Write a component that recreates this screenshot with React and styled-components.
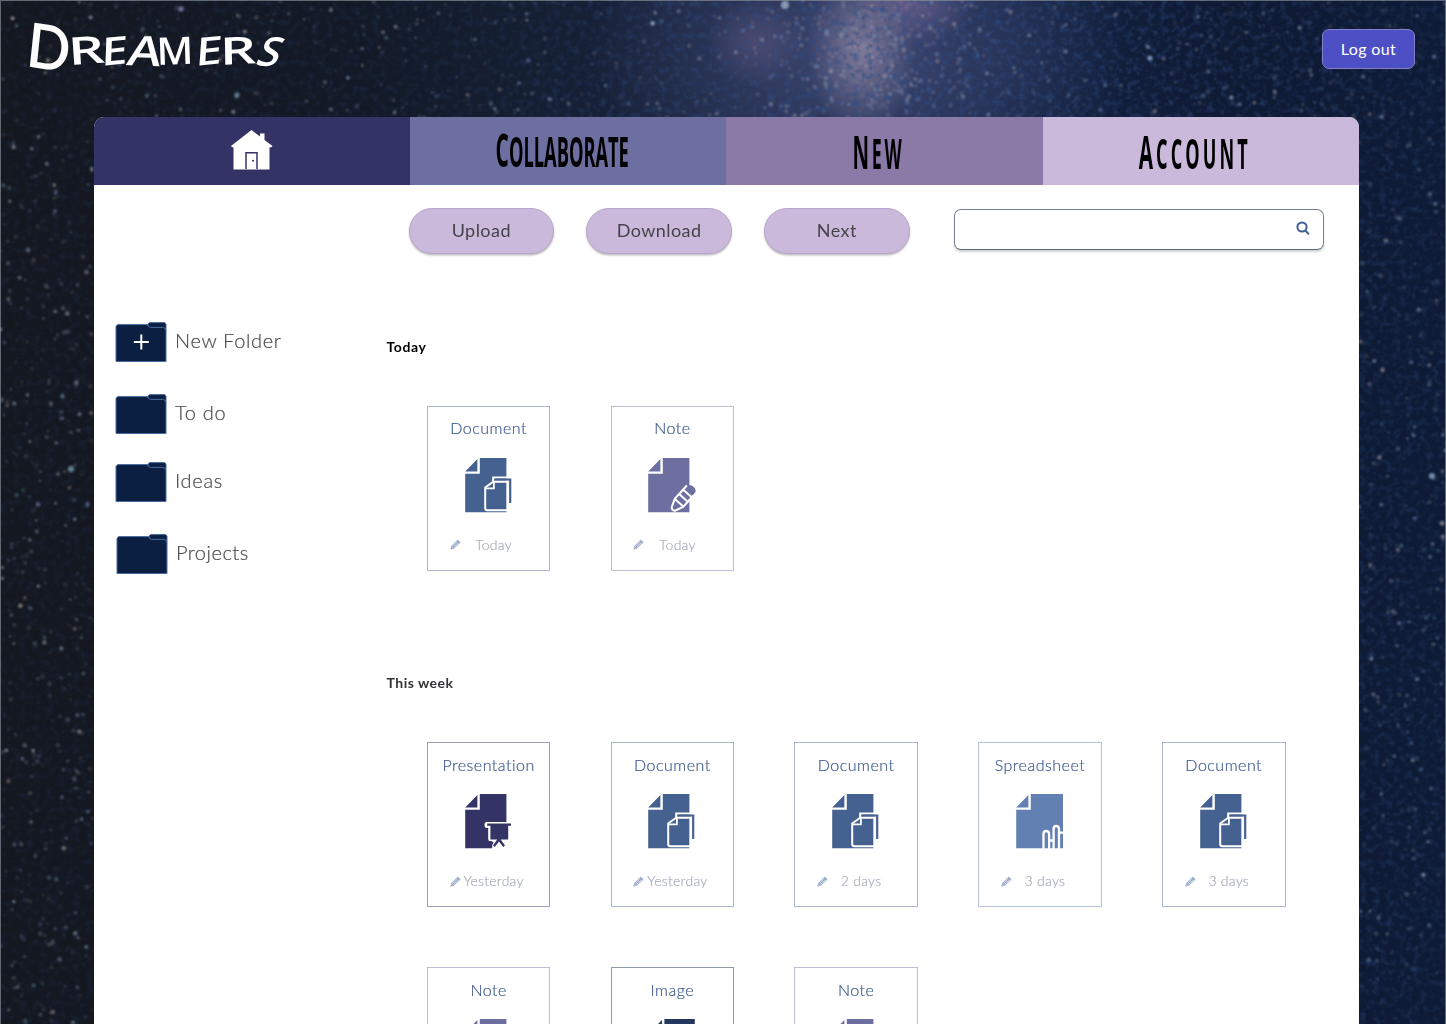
import React from "react";
import styled, { createGlobalStyle } from "styled-components";

const GlobalStyle = createGlobalStyle`
  * { box-sizing: border-box; }
  body { margin: 0; font-family: Lato, "Open Sans", sans-serif; background: #111827; }
  button { font: inherit; }
`;

const Page = styled.div`
  position: relative;
  width: 1446px;
  height: 1024px;
  overflow: hidden;
  display: flex;
  flex-direction: column;
  background:
    radial-gradient(ellipse 55px 85px at 862px 50px, rgba(170, 156, 180, 0.6), transparent),
    radial-gradient(ellipse 60px 45px at 915px 0px, rgba(150, 125, 175, 0.5), transparent),
    radial-gradient(ellipse 50px 45px at 755px 42px, rgba(120, 100, 145, 0.4), transparent),
    radial-gradient(ellipse 270px 200px at 860px 50px, rgba(78, 84, 132, 0.75), transparent),
    linear-gradient(90deg, #14181f 0%, #131926 25%, #17223a 45%, #132242 70%, #0f1a33 85%, #0e1b36 100%);
`;

const Sky = styled.svg`
  position: absolute;
  inset: 0;
`;

const Frame = styled.div`
  position: absolute;
  inset: 0;
  border: 1px solid rgba(140, 148, 155, 0.65);
  border-bottom: 0;
`;

const Header = styled.header`
  position: relative;
  height: 116.5px;
  flex: none;
  display: flex;
  justify-content: space-between;
  align-items: flex-start;
  padding: 29px 31px 0 26px;
`;

const Logo = styled.h1`
  margin: -18px 0 0;
  height: 60px;
  display: flex;
  align-items: baseline;
  color: #fff;
  font-family: "Open Sans", sans-serif;
  font-weight: 600;
  line-height: 60px;
`;

const LogoLetter = styled.span`
  display: block;
  width: ${(p) => p.$width}px;
  font-size: ${(p) => p.$size}px;
  transform-origin: 0 75%;
  transform: translateY(${(p) => p.$drop || 0}px) skewX(${(p) => p.$skew}deg) rotate(${(p) => p.$turn}deg) scaleX(${(p) => p.$stretch});
  &:first-child { font-family: Lato, sans-serif; }
`;

const LogOut = styled.button`
  width: 93px;
  height: 40px;
  padding: 0 0 2px;
  border: 1px solid #8380c9;
  border-radius: 7px;
  background: #4d4fc4;
  color: #fff;
  font-size: 16px;
  letter-spacing: 0.35px;
`;

const Panel = styled.main`
  position: relative;
  flex: 1;
  min-height: 0;
  width: 1265.5px;
  margin-left: 93.5px;
  display: flex;
  flex-direction: column;
  background: #fff;
  border-radius: 10px 10px 0 0;
  overflow: hidden;
`;

const Tabs = styled.nav`
  flex: none;
  height: 68px;
  display: grid;
  grid-template-columns: repeat(4, 1fr);
  grid-template-rows: 68px;
`;

const Tab = styled.a`
  display: flex;
  align-items: center;
  justify-content: center;
  padding-bottom: 1px;
  background: ${(p) => p.$color};
`;

const TabLabel = styled.span`
  display: block;
  font: 700 41px/60px "Open Sans", sans-serif;
  text-transform: uppercase;
  color: #000;
  white-space: nowrap;
  letter-spacing: ${(p) => p.$spacing}px;
  transform: translate(${(p) => p.$shift}px, ${(p) => p.$drop}px) scaleX(${(p) => p.$narrow});
  &::first-letter { font-size: 47px; }
`;

const Toolbar = styled.div`
  flex: none;
  display: flex;
  align-items: flex-start;
  padding: 23.5px 0 0 315px;
  height: 113px;
`;

const Pill = styled.button`
  width: 145.6px;
  height: 46px;
  margin-right: 32.2px;
  padding: 0 0 2px;
  border: 1px solid #b7a5cb;
  border-radius: 23px;
  background: #cbb9dc;
  box-shadow: 0 1.5px 2px rgba(0, 0, 0, 0.26);
  color: #454348;
  font-size: 18px;
  letter-spacing: 0.45px;
`;

const Search = styled.label`
  width: 370px;
  height: 41px;
  margin: 0.5px 0 0 12px;
  padding: 0 13px 2px 12px;
  display: flex;
  align-items: center;
  border: 1px solid #75829a;
  border-bottom-color: #5d6980;
  border-radius: 7px;
  box-shadow: 0 1.5px 2px rgba(0, 0, 0, 0.18);
  input { flex: 1; border: 0; outline: 0; font: inherit; background: none; }
`;

const Body = styled.div`
  display: flex;
  flex: 1;
  min-height: 0;
`;

const Sidebar = styled.aside`
  width: 293px;
  flex: none;
  padding: 24px 0 0 21.5px;
`;

const FolderRow = styled.a`
  display: flex;
  height: ${(p) => p.$height}px;
  margin-left: ${(p) => p.$indent || 0}px;
  color: #4c4c4e;
  font-size: 20px;
  font-weight: 300;
  line-height: 37px;
  letter-spacing: ${(p) => p.$spacing}px;
  -webkit-text-stroke: 0.2px #4c4c4e;
  svg { flex: none; margin-right: 8px; }
`;

const Files = styled.div`
  flex: 1;
`;

const Section = styled.section`
  height: 336.5px;
  padding-top: 40px;
`;

const SectionTitle = styled.h2`
  margin: 0;
  height: 68.3px;
  font-size: 14px;
  line-height: 18px;
  font-weight: 700;
  letter-spacing: ${(p) => p.$spacing}px;
  color: ${(p) => p.$color};
`;

const Grid = styled.div`
  display: grid;
  grid-template-columns: repeat(5, 123.6px);
  gap: 60px 60.2px;
  padding-left: 40.3px;
`;

const Card = styled.article`
  height: 165px;
  border: 1px solid ${(p) => p.$border};
  display: flex;
  flex-direction: column;
  align-items: center;
  padding-top: 11.4px;
`;

const CardTitle = styled.h3`
  margin: 0 0 19.7px;
  font-size: 16px;
  line-height: 20px;
  font-weight: 300;
  letter-spacing: 0.5px;
  color: #3f5a8e;
  white-space: nowrap;
  -webkit-text-stroke: 0.2px #3f5a8e;
`;

const CardFoot = styled.div`
  width: 100%;
  margin-top: 21px;
  padding-left: 21.8px;
  display: flex;
  align-items: center;
  color: #a9adbb;
  font-size: 14px;
  font-weight: 300;
  line-height: 20px;
  -webkit-text-stroke: 0.2px #a9adbb;
  span { width: 66px; text-align: center; letter-spacing: 0.25px; }
  svg { flex: none; }
`;

function seeded(seed) {
  let s = seed;
  return () => {
    s = (s * 1664525 + 1013904223) % 4294967296;
    return s / 4294967296;
  };
}

function makeStars() {
  const rnd = seeded(71);
  const tints = ["#8ea5c5", "#b3aab6", "#a7b8ca", "#6c92a5", "#8b87bd", "#b9aaa3"];
  const stars = [];
  const add = (x, y, r, o) =>
    stars.push({ x, y, r, o, c: tints[Math.floor(rnd() * tints.length)] });
  for (let i = 0; i < 600; i++) add(rnd() * 1446, rnd() * 118, 0.9 + rnd() * 1.3, 0.12 + rnd() * rnd() * 0.68);
  for (let i = 0; i < 440; i++) add(rnd() * 94, 110 + rnd() * 914, 0.9 + rnd() * 1.4, 0.12 + rnd() * rnd() * 0.7);
  for (let i = 0; i < 300; i++) add(1359 + rnd() * 87, 110 + rnd() * 914, 0.9 + rnd() * 1.4, 0.12 + rnd() * rnd() * 0.68);
  for (let i = 0; i < 300; i++) add(740 + (rnd() + rnd()) * 150, rnd() * 118, 1.1 + rnd() * 1.2, 0.15 + rnd() * 0.3);
  add(785, 5, 4, 0.75);
  add(71, 469, 3.2, 0.8);
  add(1432, 476, 3, 0.8);
  add(181, 9, 2.8, 0.75);
  add(237, 95, 2.7, 0.75);
  add(1150, 58, 2.6, 0.8);
  return stars;
}
const STARS = makeStars();

function NightSky() {
  return (
    <Sky width="1446" height="1024">
      <defs>
        <filter id="soft"><feGaussianBlur stdDeviation="0.95" /></filter>
        <filter id="grain" x="0" y="0" width="100%" height="100%" colorInterpolationFilters="sRGB">
          <feTurbulence type="fractalNoise" baseFrequency="0.15" numOctaves="2" seed="8" />
          <feColorMatrix values="0 0 0 0 0.18  0 0 0 0 0.3  0 0 0 0 0.52  1.9 0 0 0 -0.85" />
        </filter>
        <linearGradient id="fade">
          <stop offset="0" stopColor="#fff" stopOpacity="0.2" />
          <stop offset="0.35" stopColor="#fff" stopOpacity="0.3" />
          <stop offset="0.6" stopColor="#fff" stopOpacity="0.85" />
          <stop offset="1" stopColor="#fff" stopOpacity="0.4" />
        </linearGradient>
        <mask id="grainMask"><rect width="1446" height="1024" fill="url(#fade)" /></mask>
      </defs>
      <g mask="url(#grainMask)"><rect width="1446" height="1024" filter="url(#grain)" /></g>
      <g filter="url(#soft)">
        {STARS.map((s, i) => (
          <circle key={i} cx={s.x} cy={s.y} r={s.r} fill={s.c} opacity={s.o} />
        ))}
      </g>
    </Sky>
  );
}

const HomeIcon = () => (
  <svg width="42" height="40" viewBox="0 0 42 40">
    <path d="M20.5 0 29 6.5V3.5h4.5v6.6L41.5 16l-1 1.2H38.5V39.5H2.5V17.2H1L0 16Z" fill="#fff" />
    <path d="M15 39V22.8H26V39" fill="none" stroke="#333366" strokeWidth="1.5" />
    <circle cx="22" cy="30.7" r="1" fill="#333366" />
  </svg>
);

const FolderIcon = ({ plus }) => (
  <svg width="52" height="41" viewBox="0 0 52 41" fill="#0a1f42" stroke="#4c6a9f" strokeWidth="1">
    <path d="M33 4.5V2.2L34.5.6H49.5L51 2V9H36Z" />
    <path d="M1 39.5V4.2L2.8 2.6H32.5Q33.4 5.4 35.5 5.4H48Q50.8 5.8 51 9V39.5Z" />
    {plus && <path d="M26.3 12.6v14.8M18.8 20h15" stroke="#fff" strokeWidth="2" />}
  </svg>
);

const PencilMark = () => (
  <svg width="11" height="11" viewBox="0 0 11 11">
    <path d="M.8 10.2 1.7 7 7.7 1.1 10.2 3.2 4 9.2Z" fill="#c9d1e4" stroke="#8f9dc0" strokeWidth=".7" />
    <path d="m1.8 7.2 2 1.9M7 2l2.2 2.1M3 7.8 8.4 2.6" stroke="#7788b5" strokeWidth=".6" />
  </svg>
);

const kinds = {
  Document: { color: "#45618f", border: "#a9b6cc" },
  Note: { color: "#6c6f9f", border: "#bdbdd4" },
  Presentation: { color: "#333366", border: "#a09fb8" },
  Spreadsheet: { color: "#6380b2", border: "#b4c1da", edge: 46.8 },
  Image: { color: "#23375f", border: "#9199ab", shift: 1.6, edge: 45 },
};

const overlays = {
  Document: (c) => (
    <>
      <path d="M28 24V19.6H42" stroke="#fff" strokeWidth="2" fill="none" />
      <path d="M29.5 21.6H45V45" stroke={c} strokeWidth="2.2" fill="none" />
      <path d="M43 52.2H22Q20 52.2 20 50V29.5L28 23.8H42.6V52" stroke="#fff" strokeWidth="2" fill="none" />
      <path d="M20 30.3H28.7V23" stroke="#fff" strokeWidth="1.8" fill="none" />
    </>
  ),
  Note: (c) => (
    <g transform="translate(24.2 52.2) rotate(-48)">
      <path d="M0 0 8-5.2H27Q31.5-5.2 31.5 0T27 5.2H8Z" fill={c} />
      <path d="M28-5.8H10L1.5-2.4Q-.8 0 1.5 2.4L10 5.8H25M10-5V5M16.5-5V5M22.5-5V5" stroke="#fff" strokeWidth="2" fill="none" />
    </g>
  ),
  Presentation: (c) => (
    <>
      <path d="M27 55V51L28.5 48.5 26 47H24.2Q23 47 23 45V34H21.5Q19.3 34 19.3 31T21.5 28H46V48L41 55Z" fill="#fff" />
      <path d="M22 29.6H45.8V31.8H43V45.5H35.5L39.8 51.5 38 53 33.8 47.6 29.5 53 27.8 51.5 32 45.5H25.2V31.8H22Z" fill={c} />
    </>
  ),
  Spreadsheet: () => (
    <path d="M27.3 55V40Q27.3 37 30 37T32.9 40V55M32.9 46.5H37.4M37.4 55V35Q37.4 32 40 32T42.8 35V55M42.8 38.7H47.5" stroke="#fff" strokeWidth="2.3" fill="none" />
  ),
  Image: () => null,
};

function FileIcon({ kind }) {
  const { color, edge = 41.2, shift = 0 } = kinds[kind];
  return (
    <svg width="48" height="56" viewBox={`${-0.2 - shift} 0 48 56`}>
      <path d={`M14.6 0H${edge}V54.3H0V15.8H14.6Z`} fill={color} />
      <path d="M0 13.4 12.2.9V13.4Z" fill={color} />
      {overlays[kind](color)}
    </svg>
  );
}

function FileCard({ kind, when }) {
  return (
    <Card $border={kinds[kind].border}>
      <CardTitle>{kind}</CardTitle>
      <FileIcon kind={kind} />
      {when && <CardFoot><PencilMark /><span>{when}</span></CardFoot>}
    </Card>
  );
}

const logoLetters = [
  { ch: "D", width: 43, size: 62, skew: 3, turn: 9, stretch: 0.92, drop: 1 },
  { ch: "r", width: 32, size: 38, skew: 0, turn: -4, stretch: 1.5 },
  { ch: "e", width: 25, size: 39, skew: -8, turn: -6, stretch: 1.2, drop: 1 },
  { ch: "a", width: 31, size: 41, skew: -8, turn: 2, stretch: 1.25 },
  { ch: "m", width: 38, size: 38, skew: 0, turn: -2, stretch: 1.05 },
  { ch: "e", width: 25, size: 39, skew: -10, turn: -6, stretch: 1.2, drop: 1 },
  { ch: "r", width: 34, size: 38, skew: -2, turn: -3, stretch: 1.5 },
  { ch: "s", width: 24, size: 40, skew: -18, turn: 4, stretch: 1.05 },
];

const folders = [
  { name: "New Folder", height: 72.5, spacing: 0.65, plus: true },
  { name: "To do", height: 68, spacing: 0.7 },
  { name: "Ideas", height: 71.5, spacing: 0.7 },
  { name: "Projects", height: 50, spacing: 0.5, indent: 1 },
];

const today = [["Document", "Today"], ["Note", "Today"]];
const week = [
  ["Presentation", "Yesterday"], ["Document", "Yesterday"], ["Document", "2 days"],
  ["Spreadsheet", "3 days"], ["Document", "3 days"],
  ["Note"], ["Image"], ["Note"],
];

const cards = (list) => list.map(([kind, when], i) => <FileCard key={i} kind={kind} when={when} />);

export default function App() {
  return (
    <Page>
      <GlobalStyle />
      <NightSky />
      <Frame />
      <Header>
        <Logo aria-label="Dreamers">
          {logoLetters.map((l, i) => (
            <LogoLetter key={i} $width={l.width} $size={l.size} $skew={l.skew} $turn={l.turn} $stretch={l.stretch} $drop={l.drop}>
              {l.ch.toUpperCase()}
            </LogoLetter>
          ))}
        </Logo>
        <LogOut>Log out</LogOut>
      </Header>
      <Panel>
        <Tabs>
          <Tab $color="#333366"><HomeIcon /></Tab>
          <Tab $color="#6c6f9f"><TabLabel $narrow={0.445} $spacing={0} $shift={-5.5} $drop={-0.5}>Collaborate</TabLabel></Tab>
          <Tab $color="#8b79a8"><TabLabel $narrow={0.435} $spacing={6} $shift={-6} $drop={1.5}>New</TabLabel></Tab>
          <Tab $color="#cbb9dc"><TabLabel $narrow={0.44} $spacing={7} $shift={-6.5} $drop={1.5}>Account</TabLabel></Tab>
        </Tabs>
        <Toolbar>
          <Pill>Upload</Pill>
          <Pill>Download</Pill>
          <Pill>Next</Pill>
          <Search>
            <input aria-label="Search" />
            <svg width="14" height="14" viewBox="0 0 14 14" fill="none" stroke="#3f5f98" strokeWidth="2">
              <circle cx="6" cy="6" r="4.6" /><path d="m9.3 9.3 3.6 4" />
            </svg>
          </Search>
        </Toolbar>
        <Body>
          <Sidebar>
            {folders.map((f) => (
              <FolderRow key={f.name} $height={f.height} $spacing={f.spacing} $indent={f.indent}>
                <FolderIcon plus={f.plus} />{f.name}
              </FolderRow>
            ))}
          </Sidebar>
          <Files>
            <Section>
              <SectionTitle $color="#000" $spacing={0.6}>Today</SectionTitle>
              <Grid>{cards(today)}</Grid>
            </Section>
            <Section>
              <SectionTitle $color="#343438" $spacing={0.5}>This week</SectionTitle>
              <Grid>{cards(week)}</Grid>
            </Section>
          </Files>
        </Body>
      </Panel>
    </Page>
  );
}
